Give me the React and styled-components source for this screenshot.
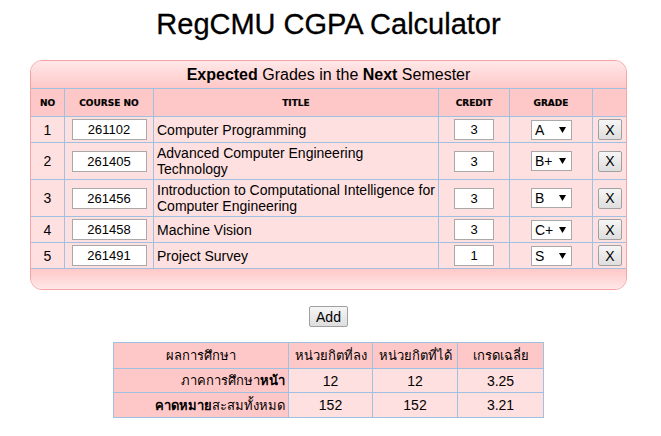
import React, { useState } from "react";
import styled, { createGlobalStyle } from "styled-components";

const GlobalStyle = createGlobalStyle`
  body {
    margin: 0;
    background: #fff;
    font-family: "Liberation Sans", Arial, sans-serif;
    color: #000;
  }
`;

const Page = styled.div`
  width: 657px;
  text-align: center;
`;

const Title = styled.h1`
  margin: 8px 0 19px;
  font-size: 29px;
  line-height: 33px;
  font-weight: normal;
  -webkit-text-stroke: 0.3px #000;
`;

// Panel rosa com cantos arredondados
const Panel = styled.div`
  width: 595px;
  margin: 0 auto;
  border: 1px solid #f5a3a3;
  border-radius: 12px;
  overflow: hidden;
  background: #ffe0e0;
`;

const Caption = styled.div`
  height: 27px;
  line-height: 27px;
  font-size: 16px;
  background: linear-gradient(#ffe8e8, #ffc8c8);
`;

const Footer = styled.div`
  height: 20px;
  background: linear-gradient(#ffc8c8, #ffe8e8);
`;

const Table = styled.table`
  border-collapse: collapse;
  table-layout: fixed;
  width: 597px;
  margin: 0 -1px;
`;

const Th = styled.th`
  height: 27px;
  padding: 0;
  background: #ffc8c8;
  border: 1px solid #a0c0e0;
  font-family: "DejaVu Sans", Verdana, sans-serif;
  font-size: 9px;
  font-weight: bold;
  -webkit-text-stroke: 0.2px #000;
`;

const Td = styled.td`
  padding: 2px ${(p) => (p.$left ? "2px 2px 3px" : "0")};
  background: #ffe0e0;
  border: 1px solid #a0c0e0;
  font-size: 14px;
  line-height: 16px;
  text-align: ${(p) => (p.$left ? "left" : "center")};
  vertical-align: middle;
`;

const TextInput = styled.input`
  box-sizing: border-box;
  width: ${(p) => p.$w}px;
  height: 21px;
  margin: 0;
  padding: 0 2px;
  border: 1px solid #a9a9a9;
  background: #fff;
  font-family: "Liberation Sans", Arial, sans-serif;
  font-size: 13px;
  text-align: center;
  vertical-align: middle;
`;

const SelectWrap = styled.span`
  position: relative;
  display: inline-block;
  vertical-align: middle;
  margin-left: 1px;
`;

const Select = styled.select`
  box-sizing: border-box;
  width: 41px;
  height: 20px;
  margin: 0;
  padding: 0 0 0 3px;
  border: 1px solid #a9a9a9;
  border-radius: 0;
  background: #fff;
  appearance: none;
  font-family: "Liberation Sans", Arial, sans-serif;
  font-size: 14px;
  color: #000;
  display: block;
`;

const Arrow = styled.svg`
  position: absolute;
  right: 6px;
  top: 7px;
  pointer-events: none;
`;

const Button = styled.button`
  box-sizing: border-box;
  width: ${(p) => p.$w}px;
  height: 21px;
  padding: 0;
  border: 1px solid #a0a0a0;
  border-radius: 2px;
  background: linear-gradient(#f6f6f6, #dedede);
  font-family: "Liberation Sans", Arial, sans-serif;
  font-size: 14px;
  color: #000;
  vertical-align: middle;
`;

const AddRow = styled.div`
  margin: 16px 0 15px;
  height: 21px;
`;

const Summary = styled.table`
  border-collapse: collapse;
  table-layout: fixed;
  width: 430px;
  margin: 0 auto;
  font-size: 14px;
`;

const SCell = styled.td`
  height: ${(p) => p.$h}px;
  padding: 0 ${(p) => (p.$right ? "3px" : "2px")} 0 2px;
  border: 1px solid #a0c0e0;
  background: ${(p) => (p.$head ? "#ffc8c8" : "#ffe0e0")};
  text-align: ${(p) => (p.$right ? "right" : "center")};
  font-size: ${(p) => (p.$thai ? "13px" : "14px")};
  font-weight: normal;
  white-space: nowrap;
`;

const grades = ["A", "B+", "B", "C+", "C", "D+", "D", "F", "S", "U"];

const initial = [
  { no: "261102", title: "Computer Programming", credit: "3", grade: "A" },
  { no: "261405", title: "Advanced Computer Engineering Technology", credit: "3", grade: "B+" },
  { no: "261456", title: "Introduction to Computational Intelligence for Computer Engineering", credit: "3", grade: "B" },
  { no: "261458", title: "Machine Vision", credit: "3", grade: "C+" },
  { no: "261491", title: "Project Survey", credit: "1", grade: "S" },
];

const GradeSelect = ({ value, onChange }) => (
  <SelectWrap>
    <Select value={value} onChange={onChange}>
      {grades.map((g) => (
        <option key={g}>{g}</option>
      ))}
    </Select>
    <Arrow width="7" height="6" viewBox="0 0 7 6">
      <path d="M0 0h7L3.5 6z" fill="#000" />
    </Arrow>
  </SelectWrap>
);

function App() {
  const [courses, setCourses] = useState(initial);

  const update = (i, key, val) =>
    setCourses(courses.map((c, j) => (j === i ? { ...c, [key]: val } : c)));

  return (
    <>
      <GlobalStyle />
      <Page>
        <Title>RegCMU CGPA Calculator</Title>
        <Panel>
          <Caption>
            <b>Expected</b> Grades in the <b>Next</b> Semester
          </Caption>
          <Table>
            <colgroup>
              <col style={{ width: 34 }} />
              <col style={{ width: 89 }} />
              <col style={{ width: 285 }} />
              <col style={{ width: 71 }} />
              <col style={{ width: 83 }} />
              <col style={{ width: 35 }} />
            </colgroup>
            <thead>
              <tr>
                <Th>NO</Th>
                <Th>COURSE NO</Th>
                <Th>TITLE</Th>
                <Th>CREDIT</Th>
                <Th>GRADE</Th>
                <Th></Th>
              </tr>
            </thead>
            <tbody>
              {courses.map((c, i) => (
                <tr key={i}>
                  <Td>{i + 1}</Td>
                  <Td>
                    <TextInput $w={75} value={c.no} onChange={(e) => update(i, "no", e.target.value)} />
                  </Td>
                  <Td $left>{c.title}</Td>
                  <Td>
                    <TextInput $w={40} value={c.credit} onChange={(e) => update(i, "credit", e.target.value)} />
                  </Td>
                  <Td>
                    <GradeSelect value={c.grade} onChange={(e) => update(i, "grade", e.target.value)} />
                  </Td>
                  <Td>
                    <Button $w={24} onClick={() => setCourses(courses.filter((_, j) => j !== i))}>X</Button>
                  </Td>
                </tr>
              ))}
            </tbody>
          </Table>
          <Footer />
        </Panel>
        <AddRow>
          <Button
            $w={39}
            onClick={() => setCourses([...courses, { no: "", title: "", credit: "", grade: "A" }])}
          >
            Add
          </Button>
        </AddRow>
        <Summary>
          <colgroup>
            <col style={{ width: 175 }} />
            <col style={{ width: 84 }} />
            <col style={{ width: 85 }} />
            <col style={{ width: 86 }} />
          </colgroup>
          <tbody>
            <tr>
              <SCell $head $thai $h={25}>ผลการศึกษา</SCell>
              <SCell $head $thai $h={25}>หน่วยกิตที่ลง</SCell>
              <SCell $head $thai $h={25}>หน่วยกิตที่ได้</SCell>
              <SCell $head $thai $h={25}>เกรดเฉลี่ย</SCell>
            </tr>
            <tr>
              <SCell $head $thai $right $h={23}>
                ภาคการศึกษา<b>หน้า</b>
              </SCell>
              <SCell $h={23}>12</SCell>
              <SCell $h={23}>12</SCell>
              <SCell $h={23}>3.25</SCell>
            </tr>
            <tr>
              <SCell $head $thai $right $h={24}>
                <b>คาดหมาย</b>สะสมทั้งหมด
              </SCell>
              <SCell $h={24}>152</SCell>
              <SCell $h={24}>152</SCell>
              <SCell $h={24}>3.21</SCell>
            </tr>
          </tbody>
        </Summary>
      </Page>
    </>
  );
}

export default App;
